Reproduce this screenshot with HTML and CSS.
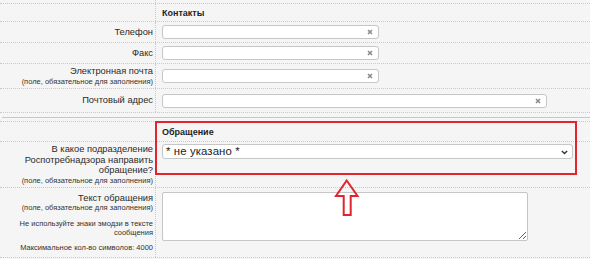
FILE: index.html
```html
<!DOCTYPE html>
<html lang="ru">
<head>
<meta charset="utf-8">
<title>Обращение</title>
<link rel="stylesheet" href="styles.css">
</head>
<body>
<div class="form">
  <section class="group">
    <div class="row cut"><div class="lbl"></div><div class="fld"></div></div>
    <div class="row h-head"><div class="lbl"></div><div class="fld"><span class="title">Контакты</span></div></div>
    <div class="row h21">
      <div class="lbl"><span class="main">Телефон</span></div>
      <div class="fld"><span class="inp short"><input type="text"><svg class="clr" viewBox="0 0 6 6"><path d="M1 1L5 5M5 1L1 5"/></svg></span></div>
    </div>
    <div class="row h21">
      <div class="lbl"><span class="main">Факс</span></div>
      <div class="fld"><span class="inp short"><input type="text"><svg class="clr" viewBox="0 0 6 6"><path d="M1 1L5 5M5 1L1 5"/></svg></span></div>
    </div>
    <div class="row h25">
      <div class="lbl"><span class="main">Электронная почта</span><span class="sub">(поле, обязательное для заполнения)</span></div>
      <div class="fld"><span class="inp short"><input type="text"><svg class="clr" viewBox="0 0 6 6"><path d="M1 1L5 5M5 1L1 5"/></svg></span></div>
    </div>
    <div class="row h24">
      <div class="lbl"><span class="main">Почтовый адрес</span></div>
      <div class="fld"><span class="inp long"><input type="text"><svg class="clr" viewBox="0 0 6 6"><path d="M1 1L5 5M5 1L1 5"/></svg></span></div>
    </div>
  </section>

  <div class="sep"></div>

  <section class="group lower">
    <div class="row h20"><div class="lbl"></div><div class="fld"><span class="title">Обращение</span></div></div>
    <div class="row h46">
      <div class="lbl">
        <span class="main wrap">В какое подразделение Роспотребнадзора направить обращение?</span>
        <span class="sub">(поле, обязательное для заполнения)</span>
      </div>
      <div class="fld top2">
        <div class="select"><span>* не указано *</span><svg class="chev" viewBox="0 0 8 5"><path d="M1 1L4 4L7 1"/></svg></div>
      </div>
    </div>
    <div class="row h70">
      <div class="lbl">
        <span class="main">Текст обращения</span>
        <span class="sub">(поле, обязательное для заполнения)</span>
        <span class="sub gap narrow">Не используйте знаки эмодзи в тексте сообщения</span>
        <span class="sub gap">Максимальное кол-во символов: 4000</span>
      </div>
      <div class="fld top4"><textarea class="area"></textarea></div>
    </div>

    <div class="highlight"></div>
    <svg class="arrow" viewBox="0 0 28 42"><polygon points="13.7,3.5 24.5,19 17.7,19 17.7,38 10.7,38 10.7,19 3,19"/></svg>
  </section>
</div>
</body>
</html>
```

FILE: styles.css
```css
* { box-sizing: border-box; }

html, body {
  margin: 0;
  padding: 0;
  background: #f5f5f5;
}

body {
  font-family: "Liberation Sans", Arial, sans-serif;
  color: #222;
}

.form {
  width: 590px;
  height: 259px;
  overflow: hidden;
}

.group {
  position: relative;
}

.row {
  display: grid;
  grid-template-columns: 156px 1fr;
  border-bottom: 1px dotted #c9c9c9;
}

.cut { height: 4px; }
.h-head { height: 18px; }
.h20 { height: 20px; }
.h21 { height: 21px; }
.h24 { height: 24px; }
.h25 { height: 25px; }
.h46 { height: 46px; }
.h70 { height: 70px; }

.lower {
  margin-top: 3px;
  border-top: 1px dotted #c9c9c9;
}

.lbl {
  border-right: 1px dotted #c9c9c9;
  padding-right: 2px;
  text-align: right;
  display: flex;
  flex-direction: column;
  justify-content: center;
  align-items: flex-end;
}

.main {
  display: block;
  font-size: 9.3px;
  line-height: 10.5px;
  color: #2a2a2a;
}

.main.wrap { width: 130px; }

.sub {
  display: block;
  font-size: 7.5px;
  line-height: 9px;
  color: #333;
}

.sub.gap { margin-top: 6.5px; }
.sub.narrow { width: 140px; }

.fld {
  padding-left: 6px;
  display: flex;
  align-items: center;
}

.fld.top2 { align-items: flex-start; padding-top: 2px; }
.fld.top4 { align-items: flex-start; padding-top: 4px; }

.title {
  font-size: 9px;
  font-weight: bold;
  color: #1e1e1e;
}

.inp {
  position: relative;
  display: block;
  height: 14px;
}

.inp.short { width: 217px; }
.inp.long { width: 385px; }

.inp input {
  display: block;
  width: 100%;
  height: 100%;
  margin: 0;
  padding: 0 3px;
  border: 1px solid #c6c6c6;
  border-radius: 3px;
  background: #fff;
  font: 9px "Liberation Sans", Arial, sans-serif;
  outline: none;
}

.clr {
  position: absolute;
  right: 6px;
  top: 4px;
  width: 6px;
  height: 6px;
  fill: none;
  stroke: #8c8c8c;
  stroke-width: 1.6;
}

.sep {
  height: 1px;
  margin: 4px 0 0 2px;
  background: #c8c8c8;
}

.select {
  position: relative;
  width: 411px;
  height: 15px;
  border: 1px solid #c6c6c6;
  border-radius: 3px;
  background: #fff;
  padding-left: 3px;
  font-size: 11.4px;
  line-height: 13px;
  color: #222;
  letter-spacing: 0.1px;
}

.chev {
  position: absolute;
  right: 4px;
  top: 5px;
  width: 7px;
  height: 4.5px;
  fill: none;
  stroke: #333;
  stroke-width: 1.6;
}

.area {
  display: block;
  width: 366px;
  height: 49px;
  margin: 0;
  border: 1px solid #c6c6c6;
  border-radius: 2px;
  background: #fff;
  padding: 2px;
  font: 9px "Liberation Sans", Arial, sans-serif;
  outline: none;
}

.highlight {
  position: absolute;
  left: 155px;
  top: -1px;
  width: 422px;
  height: 54px;
  border: 2px solid #e2242f;
}

.arrow {
  position: absolute;
  left: 333px;
  top: 55px;
  width: 28px;
  height: 42px;
  fill: none;
  stroke: #e2242f;
  stroke-width: 2;
}
```
